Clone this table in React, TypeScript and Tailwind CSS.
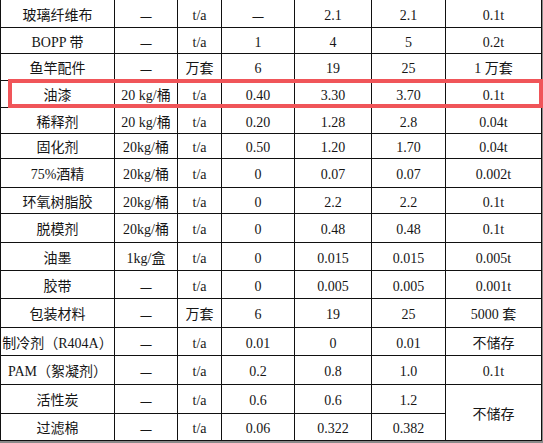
import React from 'react';

type Row = {
  name: string;
  spec: string;
  unit: string;
  a: string;
  b: string;
  c: string;
  store?: string;
  span?: number;
};

const rows: Row[] = [
  { name: '玻璃纤维布', spec: '—', unit: 't/a', a: '—', b: '2.1', c: '2.1', store: '0.1t' },
  { name: 'BOPP 带', spec: '—', unit: 't/a', a: '1', b: '4', c: '5', store: '0.2t' },
  { name: '鱼竿配件', spec: '—', unit: '万套', a: '6', b: '19', c: '25', store: '1 万套' },
  { name: '油漆', spec: '20 kg/桶', unit: 't/a', a: '0.40', b: '3.30', c: '3.70', store: '0.1t' },
  { name: '稀释剂', spec: '20 kg/桶', unit: 't/a', a: '0.20', b: '1.28', c: '2.8', store: '0.04t' },
  { name: '固化剂', spec: '20kg/桶', unit: 't/a', a: '0.50', b: '1.20', c: '1.70', store: '0.04t' },
  { name: '75%酒精', spec: '20kg/桶', unit: 't/a', a: '0', b: '0.07', c: '0.07', store: '0.002t' },
  { name: '环氧树脂胶', spec: '20kg/桶', unit: 't/a', a: '0', b: '2.2', c: '2.2', store: '0.1t' },
  { name: '脱模剂', spec: '20kg/桶', unit: 't/a', a: '0', b: '0.48', c: '0.48', store: '0.1t' },
  { name: '油墨', spec: '1kg/盒', unit: 't/a', a: '0', b: '0.015', c: '0.015', store: '0.005t' },
  { name: '胶带', spec: '—', unit: 't/a', a: '0', b: '0.005', c: '0.005', store: '0.001t' },
  { name: '包装材料', spec: '—', unit: '万套', a: '6', b: '19', c: '25', store: '5000 套' },
  { name: '制冷剂（R404A）', spec: '—', unit: 't/a', a: '0.01', b: '0', c: '0.01', store: '不储存' },
  { name: 'PAM（絮凝剂）', spec: '—', unit: 't/a', a: '0.2', b: '0.8', c: '1.0', store: '0.1t' },
  { name: '活性炭', spec: '—', unit: 't/a', a: '0.6', b: '0.6', c: '1.2', store: '不储存', span: 2 },
  { name: '过滤棉', spec: '—', unit: 't/a', a: '0.06', b: '0.322', c: '0.382' },
];

// the dash in the source is the full-width CJK one
function Val({ v }: { v: string }) {
  if (v === '—') {
    return <span className="font-['Noto_Sans_CJK_SC',sans-serif]">—</span>;
  }
  return <>{v}</>;
}

function Cell({ children, className = '' }: { children?: React.ReactNode; className?: string }) {
  return (
    <div className={`bg-white flex items-center justify-center pt-[3px] whitespace-nowrap ${className}`}>
      {children}
    </div>
  );
}

export default function App() {
  return (
    <div className="relative w-[543px] h-[443px] overflow-hidden bg-white">
      <div className="-mt-px w-[543px] bg-[#8a8a8a] pr-px pb-[3px]">
        <div
          className="grid grid-cols-[113px_62px_43px_72px_76px_73px_95px] grid-rows-[27px_25px_26px_26px_25px_24px_28px_25px_28px_27px_27px_28px_27px_28px_28px_26px] gap-px bg-[#111] p-px text-[14px] text-[#161616]"
          style={{ fontFamily: '"Liberation Serif", "Noto Sans CJK SC", serif' }}
        >
          {rows.map((r) => (
            <React.Fragment key={r.name}>
              <Cell>{r.name}</Cell>
              <Cell><Val v={r.spec} /></Cell>
              <Cell>{r.unit}</Cell>
              <Cell><Val v={r.a} /></Cell>
              <Cell>{r.b}</Cell>
              <Cell>{r.c}</Cell>
              {r.store !== undefined && (
                <Cell className={r.span === 2 ? 'row-span-2' : ''}>{r.store}</Cell>
              )}
            </React.Fragment>
          ))}
        </div>
      </div>

      {/* highlight box */}
      <div className="absolute left-[8px] top-[79px] w-[535px] h-[29px] border-4 border-[#f05559] pointer-events-none" />
    </div>
  );
}
